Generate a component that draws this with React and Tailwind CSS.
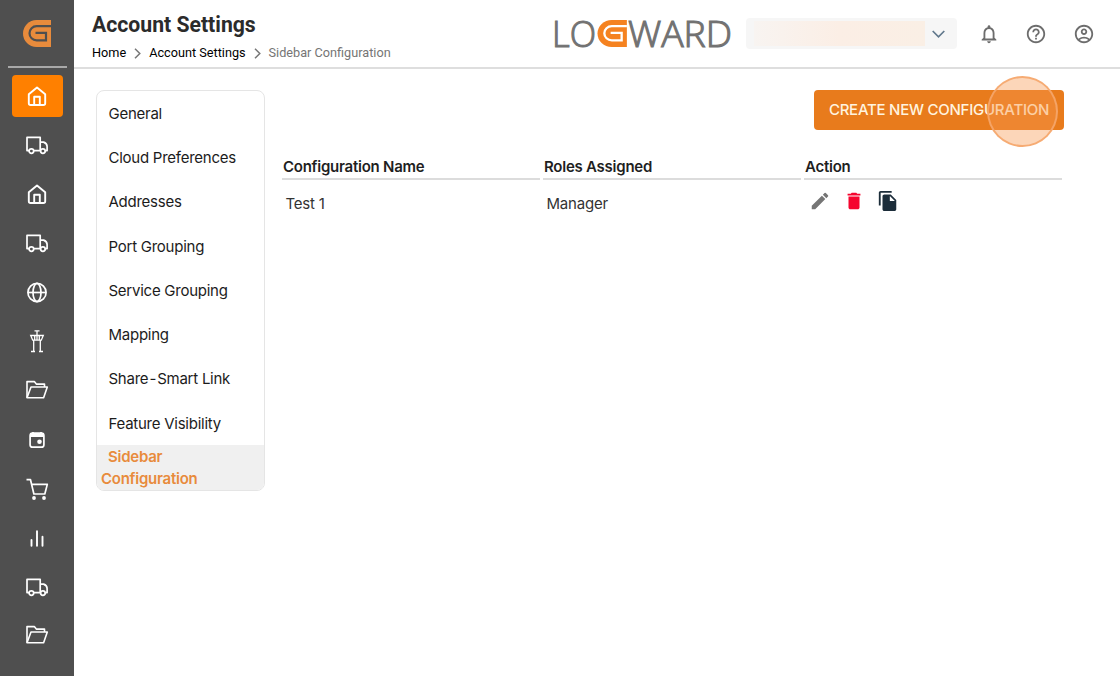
import React from 'react';
import {
  MdDelete,
  MdEdit,
  MdFileCopy,
  MdHelpOutline,
  MdNotificationsNone,
  MdOutlineAccountCircle,
} from 'react-icons/md';

const menuItems = [
  'General',
  'Cloud Preferences',
  'Addresses',
  'Port Grouping',
  'Service Grouping',
  'Mapping',
  'Share\u200a-\u200aSmart Link',
  'Feature Visibility',
];

const columns = ['Configuration Name', 'Roles Assigned', 'Action'];

function HomeIcon() {
  return (
    <svg className="w-6 h-6" fill="none" viewBox="0 0 24 24" stroke="currentColor" strokeWidth="1.9" strokeLinejoin="round">
      <path d="M3.8 10.2 12 3.4l8.2 6.8v9q0 1.8-1.8 1.8H5.6q-1.8 0-1.8-1.8z" />
      <path d="M9.2 21v-8.2h5.6V21" />
    </svg>
  );
}

function TruckIcon() {
  return (
    <svg className="w-6 h-6" fill="none" viewBox="0 0 24 24" stroke="currentColor" strokeWidth="1.7" strokeLinejoin="round">
      <path d="M4 17.6H2V4.400h13.2v13.2H8.8" />
      <path d="M15.2 9.1h3.4c2.2.8 3.5 2.4 3.5 4.3v4.2h-1.3" />
      <circle cx="6.4" cy="18.1" r="2.3" />
      <circle cx="17.9" cy="18.1" r="2.3" />
    </svg>
  );
}

function GlobeIcon() {
  return (
    <svg className="w-6 h-6" fill="none" viewBox="0 0 24 24" stroke="currentColor" strokeWidth="1.7">
      <circle cx="12" cy="12.5" r="9.1" />
      <ellipse cx="12" cy="12.5" rx="4" ry="9.1" />
      <path d="M3 12.5h18" />
    </svg>
  );
}

function TowerIcon() {
  return (
    <svg className="w-6 h-6" fill="none" viewBox="0 0 24 24" stroke="currentColor" strokeWidth="1.3">
      <path d="M9.5 1.8h5M12 1.800v9M5.7 6.500h12.600l-2 4.700H7.700zM8.700 11.200V22.500M15.300 11.200V22.500M6 22.500h4M14 22.500h4M9.700 6.500v4.500M14.300 6.500v4.500" />
    </svg>
  );
}

function FolderIcon() {
  return (
    <svg className="w-6 h-6" fill="none" viewBox="0 0 24 24" stroke="currentColor" strokeWidth="1.6" strokeLinejoin="round">
      <path d="M2 18.800V2.600h7.300l2 2.500h8.200V8" />
      <path d="M2 18.800 6 8h16.300l-3.700 10.800z" />
    </svg>
  );
}

function CalendarIcon() {
  return (
    <svg className="w-6 h-6" fill="none" viewBox="0 0 24 24" stroke="currentColor" strokeWidth="1.7">
      <rect x="5.1" y="5.2" width="13.8" height="14" rx="2.5" />
      <path d="M5 7h14" strokeWidth="4" />
      <path d="M8 4v2M16 4v2" strokeWidth="1.6" />
      <circle cx="14.5" cy="13.8" r="2.3" fill="currentColor" stroke="none" />
    </svg>
  );
}

function CartIcon() {
  return (
    <svg className="w-6 h-6" fill="none" viewBox="0 0 24 24" stroke="currentColor" strokeWidth="1.7" strokeLinejoin="round">
      <path d="M1.5 2.7h4l3.400 14.300h10.900l2.500-9.600H6.700" />
      <circle cx="9" cy="21" r="1.9" fill="currentColor" stroke="none" />
      <circle cx="19" cy="21" r="1.9" fill="currentColor" stroke="none" />
    </svg>
  );
}

function ChartIcon() {
  return (
    <svg className="w-6 h-6" fill="none" viewBox="0 0 24 24" stroke="currentColor" strokeWidth="1.9" strokeLinecap="round">
      <path d="M6.500 14v5.700M12 5.200v14.500M17.500 10.700v9" />
    </svg>
  );
}

// solid G with a spiral channel cut into it
function GShape({ fill, channel }) {
  return (
    <g fill="none" stroke="none">
      <path d="M28 0H13.5a13.5 13.5 0 0 0 0 27H28z" fill={fill} />
      <path d="M28 6.1H13.600a7.100 7.100 0 0 0 0 14.200H23V12.900H12.500" stroke={channel} strokeWidth="2.2" />
    </g>
  );
}

const navItems = [
  HomeIcon,
  TruckIcon,
  HomeIcon,
  TruckIcon,
  GlobeIcon,
  TowerIcon,
  FolderIcon,
  CalendarIcon,
  CartIcon,
  ChartIcon,
  TruckIcon,
  FolderIcon,
];

function Sidebar() {
  return (
    <aside className="w-[74px] shrink-0 bg-[#4f4f4f] text-white flex flex-col items-center overflow-hidden">
      <div className="h-[68px] w-[59px] shrink-0 border-b-2 border-[#a8a8a8] flex justify-center pt-5">
        <svg className="w-7 h-[27px]" viewBox="0 0 28 27">
          <GShape fill="#e88b3c" channel="#4f4f4f" />
        </svg>
      </div>
      <nav className="w-full flex flex-col items-center pt-[7px]">
        {navItems.map((Icon, i) => (
          <div key={i} className="h-[49.1px] shrink-0 flex items-start">
            <div className={`w-[51px] h-[42px] rounded flex items-center justify-center ${i === 0 ? 'bg-[#ff8000]' : ''}`}>
              <Icon />
            </div>
          </div>
        ))}
      </nav>
    </aside>
  );
}

function Crumb() {
  return (
    <svg className="w-[7px] h-[11px] text-[#777]" viewBox="0 0 7 11" fill="none" stroke="currentColor" strokeWidth="1.5">
      <path d="m1 .7 4.8 4.8L1 10.3" />
    </svg>
  );
}

function Logo() {
  return (
    <svg
      className="w-[182px] h-14 overflow-visible"
      viewBox="0 0 182 56"
      fill="#727272"
      stroke="#727272"
      strokeWidth="1.1"
      fontFamily="'Open Sans', sans-serif"
      fontSize="37"
      fontWeight="300"
    >
      <text x="0" y="41" textLength="44" lengthAdjust="spacingAndGlyphs">LO</text>
      <text x="76" y="41" textLength="104" lengthAdjust="spacingAndGlyphs">WARD</text>
      <g transform="translate(45.5 14) scale(1.05 1)">
        <GShape fill="#f58220" channel="#fff" />
      </g>
    </svg>
  );
}

function Header() {
  return (
    <header className="h-[69px] shrink-0 border-b-2 border-[#dedede] flex justify-between font-[family-name:Roboto,sans-serif]">
      <div className="pl-[18px] pt-[11px]">
        <h1 className="w-fit text-[21.2px] leading-7 font-bold text-[#2b2b2b]">Account Settings</h1>
        <div className="flex items-center gap-2 mt-1 text-[12.7px] leading-5 text-black whitespace-nowrap">
          <span>Home</span>
          <Crumb />
          <span>Account Settings</span>
          <Crumb />
          <span className="text-[#757575]">Sidebar Configuration</span>
        </div>
      </div>
      <div className="flex items-center pr-[25.5px] text-[#6d6d6d]">
        <Logo />
        <div className="ml-3 w-[211px] h-[31px] rounded bg-[#f6f6f6] flex items-center">
          <div className="ml-2 w-[171px] h-[25px] bg-linear-to-r from-[#f8f4f1] via-[#fbeee5] to-[#faefe5]" />
          <svg className="ml-[7px] w-[13px] h-2 text-[#61788c]" viewBox="0 0 13 8" fill="none" stroke="currentColor" strokeWidth="1.7">
            <path d="m.7 1 5.8 5.8L12.3 1" />
          </svg>
        </div>
        <MdNotificationsNone className="ml-[21px] size-[22px]" />
        <MdHelpOutline className="ml-[25.5px] size-[22px]" />
        <MdOutlineAccountCircle className="ml-[25.5px] size-[22px]" />
      </div>
    </header>
  );
}

export default function App() {
  return (
    <div className="flex w-[1120px] h-[676px] overflow-hidden bg-white font-[family-name:Inter,sans-serif]">
      <Sidebar />
      <div className="flex-1 flex flex-col">
        <Header />
        <main className="flex items-start pt-[21px] pl-[22px]">
          {/* Settings menu */}
          <div className="w-[169px] h-[401px] rounded-lg border border-[#e5e5e5] overflow-hidden text-[15px] tracking-[-0.25px] text-[#1c1c1c]">
            {menuItems.map((item) => (
              <div key={item} className="h-[44.3px] pl-[11.5px] pt-[1.5px] flex items-center whitespace-nowrap">
                {item}
              </div>
            ))}
            <div className="h-[46px] pt-px bg-[#f0f0f0] pl-1 leading-[22px] font-semibold text-[#e88b3c]">
              <div className="pl-[7px]">Sidebar</div>
              <div>Configuration</div>
            </div>
          </div>

          {/* Configurations */}
          <div className="ml-[17px] w-[782px]">
            <div className="flex justify-end">
              <button className="relative w-[250px] h-10 rounded bg-[#e87b1c] text-[#fff3df] text-[15px] tracking-[-0.25px] font-medium whitespace-nowrap">
                CREATE NEW CONFIGURATION
                <span className="absolute left-[173px] top-[-14px] size-[71px] rounded-full border-[2.5px] border-[#f5a66b]/90 bg-[#f79850]/40" />
              </button>
            </div>
            <div className="grid grid-cols-3 gap-x-[3px] mt-6 w-[780px]">
              {columns.map((c) => (
                <div key={c} className="h-[26px] pt-px border-b-2 border-[#dcdcdc] pl-px text-[15px] tracking-[-0.25px] leading-6 font-semibold text-[#1f1f1f]">
                  {c}
                </div>
              ))}
              <div className="pl-[3.5px] pt-3 text-[15px] tracking-[-0.2px] leading-6 text-[#333]">Test 1</div>
              <div className="pl-[3.5px] pt-3 text-[15px] tracking-[-0.2px] leading-6 text-[#333]">Manager</div>
              <div className="pl-[5px] pt-[10px] flex items-start gap-3">
                <MdEdit className="size-[22px] text-[#757575]" />
                <MdDelete className="size-[22px] text-[#f5052f]" />
                <MdFileCopy className="size-[22px] text-[#1c2d3a]" />
              </div>
            </div>
          </div>
        </main>
      </div>
    </div>
  );
}
